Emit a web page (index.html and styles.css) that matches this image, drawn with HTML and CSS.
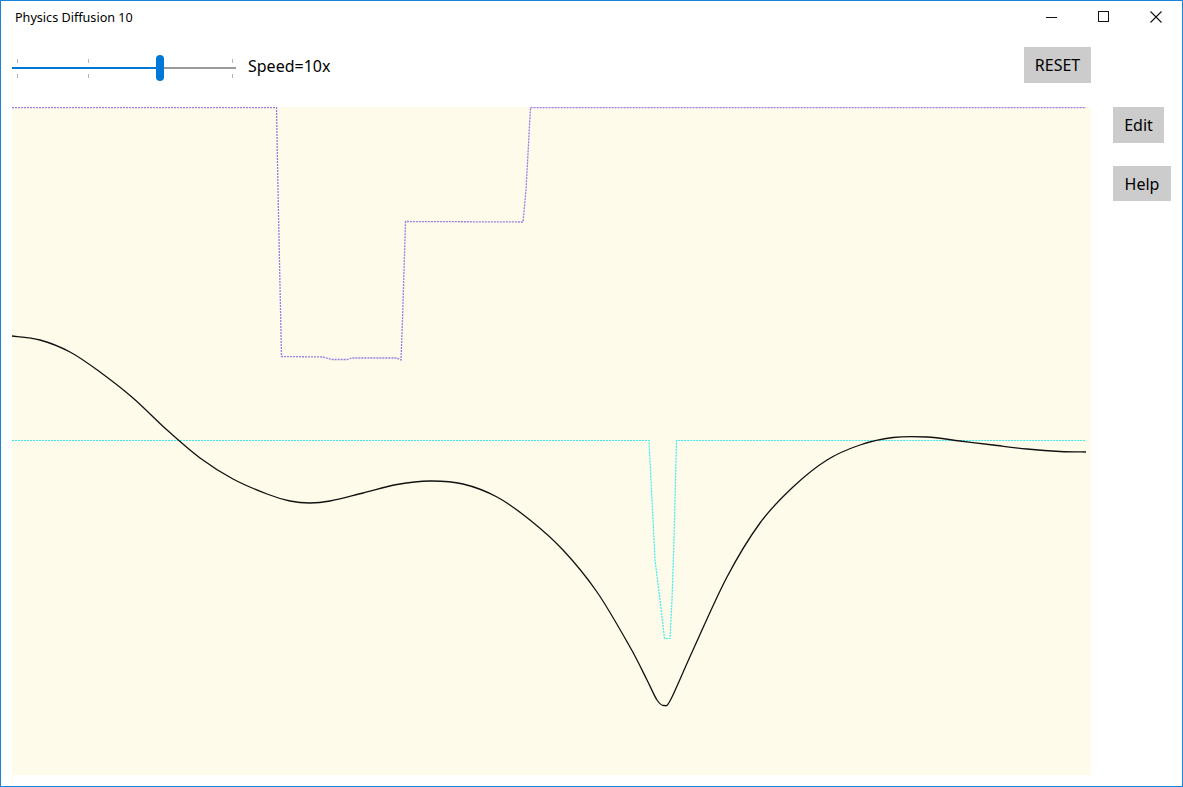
FILE: index.html
```html
<!DOCTYPE html>
<html>
<head>
<meta charset="utf-8">
<link rel="stylesheet" href="styles.css">
</head>
<body>
<div class="window">
  <div class="titlebar">
    <div class="title">Physics Diffusion 10</div>
    <div class="controls">
      <div class="ctl"><svg width="12" height="12" viewBox="0 0 12 12"><line x1="0" y1="6.5" x2="11" y2="6.5" stroke="#111" stroke-width="1"/></svg></div>
      <div class="ctl"><svg width="12" height="12" viewBox="0 0 12 12"><rect x="0.5" y="0.5" width="10" height="10" fill="none" stroke="#111" stroke-width="1"/></svg></div>
      <div class="ctl"><svg width="12" height="12" viewBox="0 0 12 12"><path d="M0.5 0.5 L11.5 11.5 M11.5 0.5 L0.5 11.5" stroke="#111" stroke-width="1.1" fill="none"/></svg></div>
    </div>
  </div>
  <div class="content">
    <div class="main">
      <div class="toolbar">
        <div class="slider">
          <div class="tick t1 up"></div><div class="tick t2 up"></div><div class="tick t3 up"></div>
          <div class="tick t1 down"></div><div class="tick t2 down"></div><div class="tick t3 down"></div>
          <div class="track"><div class="fill"></div></div>
          <div class="thumb"></div>
        </div>
        <div class="speed">Speed=10x</div>
        <div class="spacer"></div>
        <button class="btn reset">RESET</button>
      </div>
      <div class="canvas">
        <svg width="1079" height="668" viewBox="12 107 1079 668">
          <polyline fill="none" stroke="#9a7ce6" stroke-width="1.3" stroke-dasharray="2 1"
            points="12,107.5 276.5,107.5 278,190 281.5,356.5 323,357 332,359.5 347,359.5 352,358 397,358 401,360 402.5,320 405.5,221.5 523,222 526,190 530.5,107.5 1086,107.5"/>
          <polyline fill="none" stroke="#38ecec" stroke-width="1.2" stroke-dasharray="2 1"
            points="12,440.5 649,440.5 652,500 655,560 660,600 664.5,638.5 670,638.5 672,600 674,540 676.5,440.5 1086,440.5"/>
          <path id="curve" fill="none" stroke="#111" stroke-width="1.3" stroke-linejoin="round"
            data-points="12,336 40,340 70,352 100,372 133,398 167,430 200,458 233,479 267,494 290,501 310,503 330,501 363,493 397,484.5 430,481 463,484 497,497 530,520 563,550 597,592 630,647 647,680 657,700 664,705.5 671,699 693,650 727,577 760,523 793,487 827,460 860,445 893,437.5 927,437 960,441 993,445 1027,449 1060,451.5 1086,452"/>
        </svg>
      </div>
    </div>
    <div class="side">
      <button class="btn edit">Edit</button>
      <button class="btn help">Help</button>
    </div>
  </div>
</div>
<script src="script.js"></script>
</body>
</html>
```

FILE: styles.css
```css
html, body {
  margin: 0;
  padding: 0;
}
body {
  width: 1183px;
  height: 787px;
  overflow: hidden;
  background: #fff;
  font-family: "Noto Sans", "Open Sans", "Liberation Sans", sans-serif;
  color: #000;
}
.window {
  box-sizing: border-box;
  width: 1183px;
  height: 787px;
  border: 1px solid #1883d7;
  display: flex;
  flex-direction: column;
  background: #fff;
}
.titlebar {
  height: 31px;
  display: flex;
  align-items: center;
  flex: none;
}
.title {
  font-size: 12.6px;
  padding-left: 14px;
  flex: 1;
  line-height: 31px;
  padding-top: 2px;
}
.controls {
  display: flex;
  height: 31px;
}
.ctl {
  width: 52px;
  height: 31px;
  display: flex;
  align-items: center;
  justify-content: center;
}
.content {
  flex: 1;
  display: flex;
  padding-left: 11px;
  gap: 22px;
}
.main {
  width: 1079px;
  display: flex;
  flex-direction: column;
}
.toolbar {
  height: 75px;
  display: flex;
  align-items: flex-start;
}
.slider {
  position: relative;
  width: 224px;
  height: 26px;
  margin-top: 24px;
}
.track {
  position: absolute;
  left: 0;
  top: 11px;
  width: 224px;
  height: 2px;
  background: #999;
}
.fill {
  width: 146px;
  height: 2px;
  background: #0078d7;
}
.tick {
  position: absolute;
  width: 1px;
  height: 4px;
  background: #b5b5b5;
}
.tick.up { top: 3px; }
.tick.down { top: 18px; }
.t1 { left: 5px; }
.t2 { left: 76px; }
.t3 { left: 220px; }
.thumb {
  position: absolute;
  left: 144px;
  top: -1px;
  width: 8px;
  height: 26px;
  border-radius: 4px;
  background: #0078d7;
}
.speed {
  font-size: 16px;
  margin-left: 12px;
  margin-top: 23px;
  line-height: 22px;
}
.spacer { flex: 1; }
.btn {
  font-family: inherit;
  border: none;
  background: #cccccc;
  color: #000;
  font-size: 16px;
  padding: 0;
  margin: 0;
}
.reset {
  width: 67px;
  height: 36px;
  margin-top: 15px;
}
.canvas {
  width: 1079px;
  height: 668px;
  background: #fffbea;
}
.canvas svg {
  display: block;
}
.side {
  display: flex;
  flex-direction: column;
  align-items: flex-start;
  padding-top: 75px;
  gap: 23px;
}
.edit {
  width: 51px;
  height: 36px;
}
.help {
  width: 58px;
  height: 35px;
}
```

FILE: script.js
```js
(function () {
  var el = document.getElementById('curve');
  var pts = el.getAttribute('data-points').trim().split(/\s+/).map(function (p) {
    var a = p.split(',');
    return [parseFloat(a[0]), parseFloat(a[1])];
  });
  var d = 'M' + pts[0][0] + ' ' + pts[0][1];
  for (var i = 0; i < pts.length - 1; i++) {
    var p0 = pts[i - 1] || pts[i];
    var p1 = pts[i];
    var p2 = pts[i + 1];
    var p3 = pts[i + 2] || p2;
    var c1x = p1[0] + (p2[0] - p0[0]) / 6;
    var c1y = p1[1] + (p2[1] - p0[1]) / 6;
    var c2x = p2[0] - (p3[0] - p1[0]) / 6;
    var c2y = p2[1] - (p3[1] - p1[1]) / 6;
    d += ' C' + c1x.toFixed(2) + ' ' + c1y.toFixed(2) + ' ' + c2x.toFixed(2) + ' ' + c2y.toFixed(2) + ' ' + p2[0] + ' ' + p2[1];
  }
  el.setAttribute('d', d);
})();
```
